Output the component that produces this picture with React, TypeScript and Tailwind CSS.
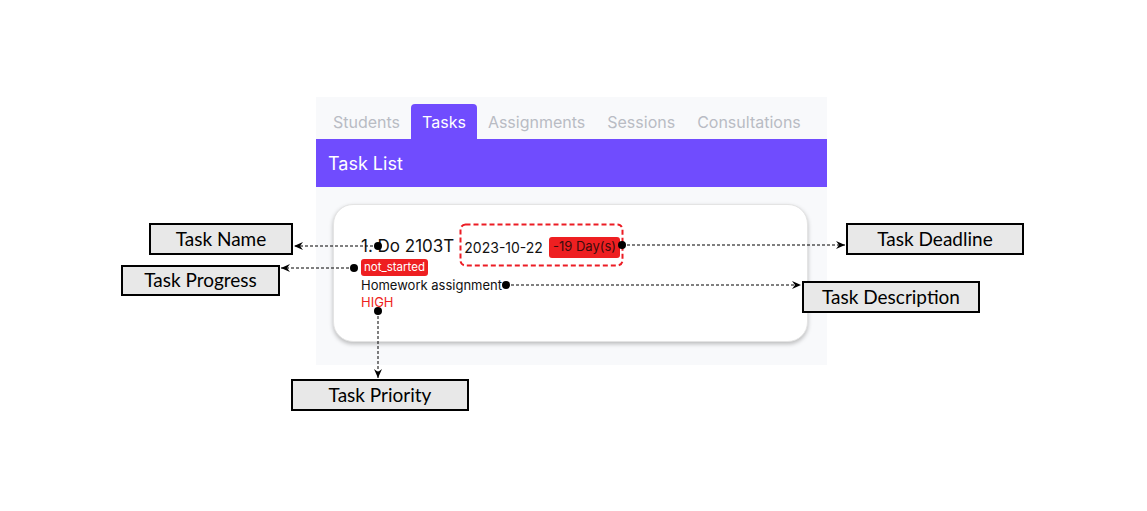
import React from 'react';

const tabs = ['Students', 'Tasks', 'Assignments', 'Sessions', 'Consultations'];

// annotation label boxes around the screenshot
const labels = [
  { text: 'Task Name', cls: 'left-[149px] top-[223px] w-[144px] h-[32px]' },
  { text: 'Task Progress', cls: 'left-[121px] top-[265px] w-[159px] h-[31px]' },
  { text: 'Task Deadline', cls: 'left-[846px] top-[223px] w-[178px] h-[32px]' },
  { text: 'Task Description', cls: 'left-[802px] top-[281px] w-[178px] h-[32px]' },
  { text: 'Task Priority', cls: 'left-[291px] top-[379px] w-[178px] h-[32px]' },
];

const Arrows: React.FC = () => (
  <svg className="absolute left-0 top-0 pointer-events-none" width={1147} height={511}>
    <defs>
      <marker id="head" markerWidth="10" markerHeight="8" refX="9" refY="4" orient="auto" markerUnits="userSpaceOnUse">
        <path d="M0,0 L9,4 L0,8 L3,4 Z" fill="#000" />
      </marker>
    </defs>
    <rect x={460.5} y={224.5} width={162} height={41} rx={5} fill="none" stroke="#ec1c24" strokeWidth={2} strokeDasharray="5 3" />
    <g stroke="#000" strokeWidth={1} strokeDasharray="3 2" fill="none">
      <line x1={378} y1={246} x2={294} y2={246} markerEnd="url(#head)" />
      <line x1={354} y1={268} x2={281} y2={268} markerEnd="url(#head)" />
      <line x1={622} y1={245} x2={845} y2={245} markerEnd="url(#head)" />
      <line x1={506} y1={285} x2={801} y2={285} markerEnd="url(#head)" />
      <line x1={378} y1={311} x2={378} y2={378} markerEnd="url(#head)" />
    </g>
    <g fill="#000">
      <circle cx={378} cy={246} r={4} />
      <circle cx={354} cy={268} r={4} />
      <circle cx={622} cy={245} r={4} />
      <circle cx={506} cy={285} r={4} />
      <circle cx={378} cy={311} r={4} />
    </g>
  </svg>
);

const App: React.FC = () => {
  return (
    <div className="relative w-[1147px] h-[511px] bg-white overflow-hidden font-['Inter',sans-serif]">
      <div className="pt-[97px] pl-[316px]">
        <div className="w-[511px] h-[268px] bg-[#f8f9fb] flex flex-col">
          <div className="flex items-end h-[42px] pl-[6px]">
            {tabs.map((t) => (
              <div
                key={t}
                className={`h-[35px] px-[11px] flex items-center text-[16px] rounded-t-[4px] ${
                  t === 'Tasks' ? 'bg-[#704cfe] text-white' : 'text-[#b9bcc4]'
                }`}
              >
                {t}
              </div>
            ))}
          </div>
          <div className="h-[48px] bg-[#704cfe] flex items-center pl-[12px] text-white text-[18px]">Task List</div>
          <div className="pt-[17px] pl-[17px]">
            <div className="w-[475px] h-[138px] bg-white rounded-[20px] border border-[#e4e4e4] shadow-[0_2px_4px_rgba(0,0,0,0.25)] pt-[31px] pl-[27px]">
              <div className="flex items-center h-[22px]">
                <span className="text-[17px] text-[#111]">1. Do 2103T</span>
                <span className="ml-[10px] text-[14px] text-[#111]">2023-10-22</span>
                <span className="ml-[6px] h-[21px] px-[4px] flex items-center rounded-[3px] bg-[#ee1f21] text-[13px] text-[#3b0c0c]">-19 Day(s)</span>
              </div>
              <div className="mt-[1px] flex">
                <span className="h-[17px] px-[3px] flex items-center rounded-[3px] bg-[#ee1f21] text-white text-[11.5px]">not_started</span>
              </div>
              <div className="text-[13px] leading-[18px] text-[#111]">Homework assignment</div>
              <div className="text-[13px] leading-[17px] text-[#ee1f21]">HIGH</div>
            </div>
          </div>
        </div>
      </div>

      <Arrows />

      {labels.map((l) => (
        <div
          key={l.text}
          className={`absolute ${l.cls} bg-[#e8e8e8] border-2 border-black flex items-center justify-center text-[19px] text-black font-['Lato',sans-serif]`}
        >
          {l.text}
        </div>
      ))}
    </div>
  );
};

export default App;
